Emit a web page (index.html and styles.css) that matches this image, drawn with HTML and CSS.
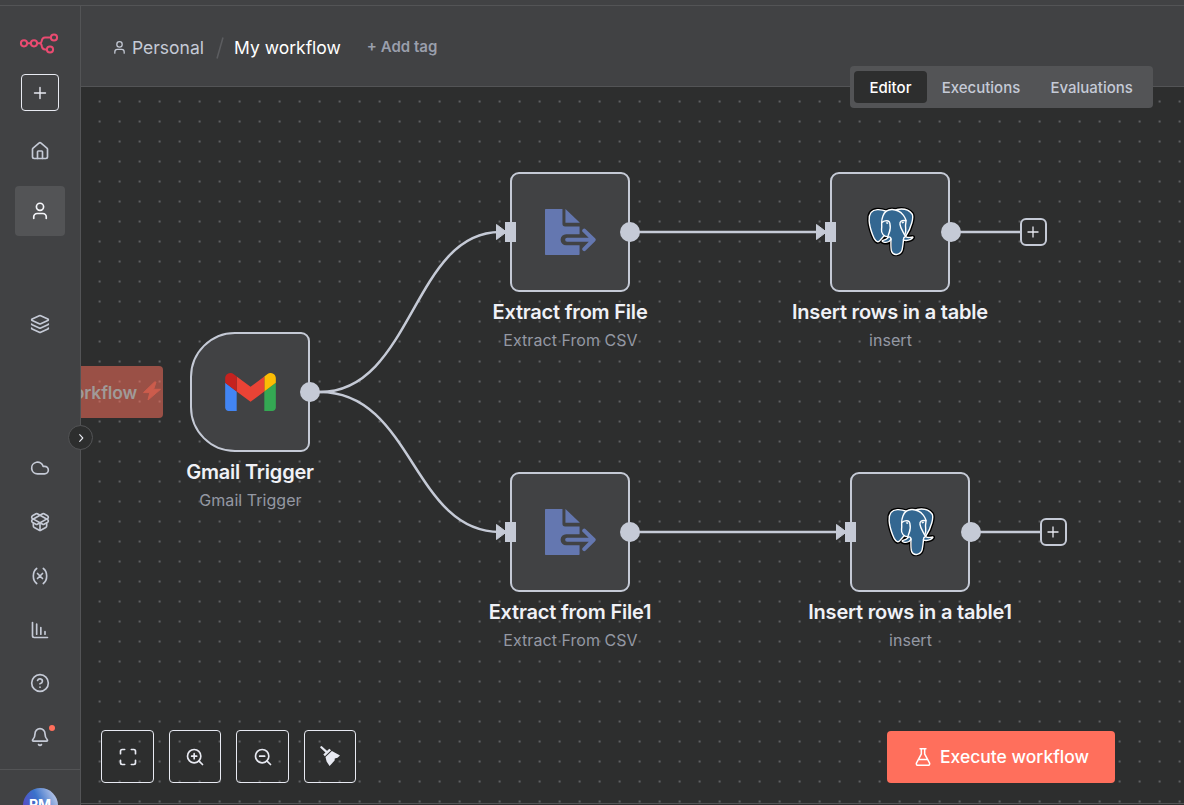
FILE: index.html
```html
<!DOCTYPE html>
<html lang="en">
<head>
<meta charset="utf-8">
<title>My workflow</title>
<link rel="stylesheet" href="styles.css">
</head>
<body>
<svg class="defs" aria-hidden="true">
  <symbol id="user" viewBox="0 0 24 24"><circle cx="12" cy="7" r="4.3"/><path d="M19.5 21v-2a4 4 0 0 0-4-4h-7a4 4 0 0 0-4 4v2"/></symbol>
  <symbol id="export" viewBox="195 148 152 137">
    <path d="M197 148h50v44q0 8 8 8h43v23h-40a16.500 16.500 0 0 0 0 33h40v27q0 2-2 2h-99q-2 0-2-2V150q0-2 2-2z"/>
    <path d="M256 148l43 41h-43z"/>
    <path class="export-arrow" d="M261 239.500h76M312 212.500l28 27-28 28"/>
  </symbol>
  <symbol id="postgres" viewBox="0 0 432.071 445.383">
    <path class="pg-outline" d="M323.205,324.227c2.833-23.601,1.984-27.062,19.563-23.239l4.463,0.392c13.517,0.615,31.199-2.174,41.587-7c22.362-10.376,35.622-27.700,13.572-23.148c-50.297,10.376-53.755-6.655-53.755-6.655c53.111-78.803,75.313-178.836,56.149-203.322C352.514-5.534,262.036,26.049,260.522,26.869l-0.482,0.089c-9.938-2.062-21.060-3.294-33.554-3.496c-22.761-0.374-40.032,5.967-53.133,15.904c0,0-161.408-66.498-153.899,83.628c1.597,31.936,45.777,241.655,98.470,178.310c19.259-23.163,37.871-42.748,37.871-42.748c9.242,6.140,20.307,9.272,31.912,8.147l0.897-0.765c-0.281,2.876-0.157,5.689,0.359,9.019c-13.572,15.167-9.584,17.830-36.723,23.416c-27.457,5.659-11.326,15.734-0.797,18.367c12.768,3.193,42.305,7.716,62.268-20.224l-0.795,3.188c5.325,4.260,4.965,30.619,5.720,49.452c0.756,18.834,2.017,36.409,5.856,46.771c3.839,10.360,8.369,37.050,44.036,29.406c29.809-6.388,52.600-15.582,54.677-101.107"/>
    <path class="pg-fill" d="M402.395,271.230c-50.302,10.376-53.760-6.655-53.760-6.655c53.111-78.808,75.313-178.843,56.153-203.326c-52.270-66.785-142.752-35.200-144.262-34.380l-0.486,0.087c-9.938-2.063-21.060-3.292-33.560-3.496c-22.761-0.373-40.026,5.967-53.127,15.902c0,0-161.411-66.495-153.904,83.630c1.597,31.938,45.776,241.657,98.471,178.312c19.260-23.163,37.869-42.748,37.869-42.748c9.243,6.140,20.308,9.272,31.908,8.147l0.901-0.765c-0.280,2.876-0.152,5.689,0.361,9.019c-13.575,15.167-9.586,17.830-36.723,23.416c-27.459,5.659-11.328,15.734-0.796,18.367c12.768,3.193,42.307,7.716,62.266-20.224l-0.796,3.188c5.319,4.260,9.054,27.711,8.428,48.969c-0.626,21.259-1.044,35.854,3.147,47.254c4.191,11.400,8.368,37.050,44.042,29.406c29.809-6.388,45.256-22.942,47.405-50.555c1.525-19.631,4.976-16.729,5.194-34.280l2.768-8.309c3.192-26.611,0.507-35.196,18.872-31.203l4.463,0.392c13.517,0.615,31.208-2.174,41.591-7c22.358-10.376,35.618-27.700,13.573-23.148z"/>
    <g class="pg-lines">
      <path d="M215.866,286.484c-1.385,49.516,0.348,99.377,5.193,111.495c4.848,12.118,15.223,35.688,50.900,28.045c29.806-6.390,40.651-18.756,45.357-46.051c3.466-20.082,10.148-75.854,11.005-87.281"/>
      <path d="M173.104,38.256c0,0-161.521-66.016-154.012,84.109c1.597,31.938,45.779,241.664,98.473,178.316c19.256-23.166,36.671-41.335,36.671-41.335"/>
      <path d="M260.349,26.207c-5.591,1.753,89.848-34.889,144.087,34.417c19.159,24.484-3.043,124.519-56.153,203.329"/>
      <path d="M348.282,263.953c0,0,3.461,17.036,53.764,6.653c22.040-4.552,8.776,12.774-13.577,23.155c-18.345,8.514-59.474,10.696-60.146-1.069c-1.729-30.355,21.647-21.133,19.960-28.739c-1.525-6.850-11.979-13.573-18.894-30.338c-6.037-14.633-82.796-126.849,21.287-110.183c3.813-0.789-27.146-99.002-124.553-100.599c-97.385-1.597-94.190,119.762-94.190,119.762"/>
      <path d="M188.604,274.334c-13.577,15.166-9.584,17.829-36.723,23.417c-27.459,5.660-11.326,15.733-0.797,18.365c12.768,3.195,42.307,7.718,62.266-20.229c6.078-8.509-0.036-22.086-8.385-25.547c-4.034-1.671-9.428-3.765-16.361,3.994z"/>
      <path d="M187.715,274.069c-1.368-8.917,2.930-19.528,7.536-31.942c6.922-18.626,22.893-37.255,10.117-96.339c-9.523-44.029-73.396-9.163-73.436-3.193c-0.039,5.968,2.889,30.260-1.067,58.548c-5.162,36.913,23.488,68.132,56.479,64.938"/>
      <path d="M350.676,123.432c0.863,15.994-3.445,26.888-3.988,43.914c-0.804,24.748,11.799,53.074-7.191,81.435"/>
    </g>
    <g class="pg-eyes">
      <path d="M172.517,141.700c-0.288,2.039,3.733,7.480,8.976,8.207c5.234,0.730,9.714-3.522,9.998-5.559c0.284-2.039-3.732-4.285-8.977-5.015c-5.237-0.731-9.719,0.333-9.996,2.367z"/>
      <path d="M331.941,137.543c0.284,2.039-3.732,7.480-8.976,8.207c-5.238,0.730-9.718-3.522-10.005-5.559c-0.277-2.039,3.740-4.285,8.979-5.015c5.239-0.730,9.718,0.333,10.002,2.368z"/>
    </g>
  </symbol>
</svg>

<div class="app">
  <div class="topstrip"></div>
  <div class="shell">
    <nav class="sidebar">
      <svg class="logo" viewBox="0 0 40 22">
        <circle cx="5" cy="11.300" r="3.100"/><circle cx="15" cy="11.300" r="3.100"/><circle cx="35" cy="5.500" r="3.100"/><circle cx="31" cy="17.500" r="3.100"/>
        <path d="M8.100 11.300h3.800M18.100 11.300h2.400c1.800 0 2-1 2.300-2.700.4-2.100 1.100-3.100 3.200-3.100h5.900M20.500 11.300c1.800 0 2 1 2.300 2.900.4 2.200 1.100 3.300 3.200 3.300h1.900"/>
      </svg>
      <button class="create"><svg class="icon i16" viewBox="0 0 16 16"><path d="M8 2.500v11M2.500 8h11"/></svg></button>
      <a class="item home"><svg class="icon i20" viewBox="0 0 24 24"><path d="M15 21v-8a1 1 0 0 0-1-1h-4a1 1 0 0 0-1 1v8"/><path d="M3 10a2 2 0 0 1 .709-1.528l7-5.999a2 2 0 0 1 2.582 0l7 5.999A2 2 0 0 1 21 10v9a2 2 0 0 1-2 2H5a2 2 0 0 1-2-2z"/></svg></a>
      <a class="item active"><svg class="icon i20"><use href="#user"/></svg></a>
      <a class="item layers"><svg class="icon i20" viewBox="0 0 24 24"><path d="M12.830 2.180a2 2 0 0 0-1.660 0L2.600 6.080a1 1 0 0 0 0 1.830l8.580 3.910a2 2 0 0 0 1.660 0l8.580-3.900a1 1 0 0 0 0-1.830z"/><path d="M2 12a1 1 0 0 0 .58.910l8.600 3.910a2 2 0 0 0 1.650 0l8.580-3.900A1 1 0 0 0 22 12"/><path d="M2 17a1 1 0 0 0 .58.910l8.600 3.910a2 2 0 0 0 1.650 0l8.580-3.900A1 1 0 0 0 22 17"/></svg></a>
      <div class="lower">
        <a class="item"><svg class="icon i20" viewBox="0 0 24 24"><path d="M17.500 19H9a7 7 0 1 1 6.710-9h1.790a4.500 4.500 0 1 1 0 9Z"/></svg></a>
        <a class="item"><svg class="icon i20" viewBox="0 0 24 24"><path d="M12 22v-9"/><path d="M15.170 2.210a1.670 1.670 0 0 1 1.630 0L21 4.570a1.930 1.930 0 0 1 0 3.360L8.820 14.790a1.655 1.655 0 0 1-1.640 0L3 12.430a1.930 1.930 0 0 1 0-3.360z"/><path d="M20 13v3.870a2.060 2.060 0 0 1-1.110 1.830l-6 3.080a1.930 1.930 0 0 1-1.780 0l-6-3.080A2.060 2.060 0 0 1 4 16.870V13"/><path d="M21 12.430a1.930 1.930 0 0 0 0-3.360L8.830 2.200a1.640 1.640 0 0 0-1.630 0L3 4.570a1.930 1.930 0 0 0 0 3.360l12.180 6.860a1.636 1.636 0 0 0 1.630 0z"/></svg></a>
        <a class="item"><svg class="icon i20" viewBox="0 0 24 24"><path d="M8 21s-4-3-4-9 4-9 4-9M16 3s4 3 4 9-4 9-4 9M15 9l-6 6M9 9l6 6"/></svg></a>
        <a class="item"><svg class="icon i20 chart" viewBox="0 0 24 24"><path d="M3 3v16a2 2 0 0 0 2 2h16M8 17V5M13 17V9M18 17v-3"/></svg></a>
        <a class="item"><svg class="icon i20" viewBox="0 0 24 24"><circle cx="12" cy="12" r="10"/><path d="M9.090 9a3 3 0 0 1 5.830 1c0 2-3 3-3 3M12 17h.01"/></svg></a>
        <a class="item bell"><svg class="icon i20" viewBox="0 0 24 24"><path d="M10.268 21a2 2 0 0 0 3.464 0"/><path d="M3.262 15.326A1 1 0 0 0 4 17h16a1 1 0 0 0 .74-1.673C19.410 13.956 18 12.499 18 8A6 6 0 0 0 6 8c0 4.499-1.411 5.956-2.738 7.326"/></svg><i class="notice"></i></a>
      </div>
      <div class="account"><span class="avatar">RM</span></div>
      <button class="expand"><svg class="icon i12" viewBox="0 0 12 12"><path d="M4.700 2.700L7.800 6l-3.100 3.300"/></svg></button>
    </nav>

    <main class="main">
      <header class="header">
        <svg class="icon person"><use href="#user"/></svg>
        <span class="project">Personal</span>
        <svg class="slash" viewBox="0 0 8 22"><path d="M7 .5L1 21.500"/></svg>
        <span class="title">My workflow</span>
        <span class="addtag">+ Add tag</span>
        <div class="tabs"><span class="tab on">Editor</span><span class="tab">Executions</span><span class="tab">Evaluations</span></div>
      </header>

      <section class="canvas">
        <div class="world">
          <svg class="wires" viewBox="0 0 1184 805">
            <defs><pattern id="dots" x="89.600" y="91.500" width="20" height="20" patternUnits="userSpaceOnUse"><circle cx="10" cy="10" r=".75" class="dot"/></pattern></defs>
            <rect width="1184" height="805" fill="url(#dots)"/>
            <g class="edges">
              <path d="M310 392H320C412.500 392 412.500 232 500 232"/>
              <path d="M310 392H320C412.500 392 412.500 532 500 532"/>
              <path d="M630 232H820M950 232H1020M630 532H840M970 532H1040"/>
            </g>
            <g class="arrows">
              <path d="M496.500 224.500l10 7.500-10 7.500zM496.500 524.500l10 7.500-10 7.500zM816.500 224.500l10 7.500-10 7.500zM836.500 524.500l10 7.500-10 7.500z"/>
            </g>
          </svg>

          <div class="trigger-run">Execute workflow<svg class="bolt" viewBox="0 0 20 20"><path d="M12.500 1L1.500 11.600h6.300L6 19 18.500 8.300h-6.800L14 1z"/></svg></div>

          <div class="node gmail">
            <div class="box"><svg class="gmail-icon" viewBox="52 42 88 66"><path fill="#4285f4" d="M58 108h14V74L52 59v43c0 3.320 2.690 6 6 6"/><path fill="#34a853" d="M120 108h14c3.320 0 6-2.690 6-6V59l-20 15"/><path fill="#fbbc04" d="M120 48v26l20-15v-8c0-7.420-8.470-11.650-14.400-7.200"/><path fill="#ea4335" d="M72 74V48l24 18 24-18v26L96 92"/><path fill="#c5221f" d="M52 51v8l20 15V48l-5.600-4.200c-5.940-4.450-14.400-.22-14.400 7.200"/></svg><i class="out"></i></div>
            <div class="name">Gmail Trigger</div><div class="sub">Gmail Trigger</div>
          </div>
          <div class="node extract-a">
            <div class="box"><svg class="export-icon"><use href="#export"/></svg><i class="in"></i><i class="out"></i></div>
            <div class="name">Extract from File</div><div class="sub">Extract From CSV</div>
          </div>
          <div class="node insert insert-a">
            <div class="box"><svg class="pg-icon"><use href="#postgres"/></svg><i class="in"></i><i class="out"></i></div>
            <div class="name">Insert rows in a table</div><div class="sub">insert</div>
          </div>
          <div class="node extract-b">
            <div class="box"><svg class="export-icon"><use href="#export"/></svg><i class="in"></i><i class="out"></i></div>
            <div class="name">Extract from File1</div><div class="sub">Extract From CSV</div>
          </div>
          <div class="node insert insert-b">
            <div class="box"><svg class="pg-icon"><use href="#postgres"/></svg><i class="in"></i><i class="out"></i></div>
            <div class="name">Insert rows in a table1</div><div class="sub">insert</div>
          </div>
          <button class="plus plus-a"><svg viewBox="0 0 12 12"><path d="M6 .5v11M.5 6h11"/></svg></button>
          <button class="plus plus-b"><svg viewBox="0 0 12 12"><path d="M6 .5v11M.5 6h11"/></svg></button>
        </div>

        <div class="footer">
          <div class="controls">
            <button class="control"><svg class="icon i20 fit" viewBox="0 0 24 24"><path d="M8 3H5a2 2 0 0 0-2 2v3M21 8V5a2 2 0 0 0-2-2h-3M3 16v3a2 2 0 0 0 2 2h3M16 21h3a2 2 0 0 0 2-2v-3"/></svg></button>
            <button class="control"><svg class="icon i20" viewBox="0 0 24 24"><circle cx="11" cy="11" r="8"/><path d="M21 21l-4.350-4.350M11 8v6M8 11h6"/></svg></button>
            <button class="control"><svg class="icon i20 fit" viewBox="0 0 24 24"><circle cx="11" cy="11" r="8"/><path d="M21 21l-4.350-4.350M8 11h6"/></svg></button>
            <button class="control"><svg class="broom" viewBox="0 0 20 20"><path class="handle" d="M1.400 1.200L6.200 5.600"/><path d="M3.300 8.600L9.300 2.800 11.100 4.300 4.900 10.200zM5.500 11L11.900 4.900 20 9.400 17.500 11.700 14.800 12.400 14.600 14.600 9.600 20 6.600 15.600z"/></svg></button>
          </div>
          <button class="execute"><svg class="icon flask" viewBox="0 0 24 24"><path d="M14 2v6a2 2 0 0 0 .245.960l5.510 10.080A2 2 0 0 1 18 22H6a2 2 0 0 1-1.755-2.960l5.510-10.080A2 2 0 0 0 10 8V2M6.453 15h11.094M8.500 2h7"/></svg>Execute workflow</button>
        </div>
      </section>
      <div class="bottomstrip"></div>
    </main>
  </div>
</div>
</body>
</html>
```
FILE: styles.css
```css
* { box-sizing: border-box; }
body { margin: 0; font-family: Inter, "Open Sans", sans-serif; background: #414244; color: #c5cad6; overflow: hidden; }
button { font: inherit; padding: 0; background: none; border: 0; color: inherit; display: flex; align-items: center; justify-content: center; }
.defs { position: absolute; width: 0; height: 0; }
.app { width: 1184px; height: 805px; display: flex; flex-direction: column; overflow: hidden; }
.topstrip { height: 6px; flex: none; border-bottom: 1px solid #535456; }
.shell { flex: 1; min-height: 0; display: flex; }

.icon { fill: none; stroke: currentColor; stroke-width: 2; stroke-linecap: round; stroke-linejoin: round; flex: none; display: block; }
.i20 { width: 20px; height: 20px; }
.i16 { width: 16px; height: 16px; stroke-width: 1.4; }
.i12 { width: 12px; height: 12px; stroke-width: 1.1; }

.sidebar { position: relative; z-index: 3; width: 81px; flex: none; border-right: 1px solid #535456; display: flex; flex-direction: column; align-items: center; color: #c5cad6; }
.logo { width: 40px; height: 22px; margin: 26px 0 20px -2px; fill: none; stroke: #ea4b71; stroke-width: 2; flex: none; }
.create { width: 38px; height: 37px; flex: none; border: 1px solid #e8eaf2; border-radius: 4px; color: #e8eaf2; }
.item { width: 50px; height: 50px; flex: none; display: flex; align-items: center; justify-content: center; border-radius: 4px; }
.home { margin-top: 15px; }
.active { margin-top: 10px; background: #535456; color: #f5f6fa; }
.layers { margin-top: 63px; }
.lower { margin-top: 94px; display: flex; flex-direction: column; gap: 3.8px; }
.chart { margin-top: 1px; }
.bell { position: relative; }
.notice { position: absolute; left: 34px; top: 13.5px; width: 6px; height: 6px; border-radius: 50%; background: #ff6f5c; }
.account { align-self: stretch; margin-top: 7px; padding-top: 18px; border-top: 1px solid #535456; display: flex; justify-content: center; }
.avatar { width: 35px; height: 35px; flex: none; border-radius: 50%; background: linear-gradient(65deg, #5b45c5 10%, #3a72cb 50%, #b9c7e8 90%); color: #fff; font-size: 14px; font-weight: 700; line-height: 34px; text-align: center; }
.expand { position: absolute; left: 68px; top: 419px; width: 25px; height: 25px; border-radius: 50%; border: 1px solid #535456; background: #2d2e2e; color: #e8eaf2; }

.main { flex: 1; min-width: 0; display: flex; flex-direction: column; }
.header { position: relative; z-index: 2; height: 81px; flex: none; border-bottom: 1px solid #535456; display: flex; align-items: center; padding-left: 31px; background: #414244; }
.person { width: 15px; height: 15px; margin-right: 5px; margin-top: 2px; }
.project { font-size: 17.5px; line-height: 24px; padding-top: 3px; }
.slash { width: 8px; height: 22px; margin: 4px 10px 0 12px; fill: none; stroke: #5c5d60; stroke-width: 1.5; }
.title { font-size: 17.5px; line-height: 24px; padding-top: 3px; color: #fff; }
.addtag { margin-left: 26px; padding-top: 1px; font-size: 15px; font-weight: 600; color: #9a9fac; }
.tabs { position: absolute; right: 31.5px; top: 60px; height: 42px; padding: 0 4.5px; display: flex; align-items: center; border-radius: 4px; background: #535456; }
.tab { height: 32px; line-height: 33px; padding: 0 15.1px; border-radius: 4px; font-size: 15px; font-weight: 500; }
.on { background: #2d2e2e; color: #fff; }

.canvas { position: relative; flex: 1; min-height: 0; background: #2d2e2e; overflow: hidden; display: flex; flex-direction: column; justify-content: flex-end; }
.bottomstrip { height: 2px; flex: none; border-top: 1px solid #535456; background: #2d2e2e; }
.world { position: absolute; left: -81px; top: -87px; width: 1184px; height: 805px; }
.wires { position: absolute; inset: 0; width: 1184px; height: 805px; }
.dot { fill: #a6a9b0; }
.edges { fill: none; stroke: #c5cad6; stroke-width: 2.5; }
.arrows { fill: #c5cad6; stroke: #c5cad6; stroke-linejoin: round; }

.trigger-run { position: absolute; right: 1021px; top: 366px; height: 52px; padding: 0 1px 0 20px; display: flex; align-items: center; gap: 5px; white-space: nowrap; border-radius: 4px; background: rgba(255, 111, 92, .52); color: #a09a98; font-size: 17.5px; font-weight: 600; letter-spacing: -.15px; }
.bolt { width: 20px; height: 20px; margin-top: -3px; fill: #cc5c4c; stroke: #cc5c4c; stroke-width: 1; stroke-linejoin: round; }

.node { position: absolute; width: 120px; display: flex; flex-direction: column; align-items: center; }
.gmail { left: 190px; top: 332px; }
.extract-a { left: 510px; top: 172px; }
.extract-b { left: 510px; top: 472px; }
.insert-a { left: 830px; top: 172px; }
.insert-b { left: 850px; top: 472px; }
.box { position: relative; width: 120px; height: 120px; border: 2px solid #c5cad6; border-radius: 9px; background: #414244; display: flex; align-items: center; justify-content: center; }
.gmail .box { border-radius: 45px 9px 9px 45px; }
.gmail-icon { width: 51px; height: 38px; }
.export-icon { width: 51px; height: 46px; fill: #6477b0; }
.export-arrow { fill: none; stroke: #6477b0; stroke-width: 12; stroke-linecap: round; stroke-linejoin: round; }
.pg-icon { width: 48px; height: 49.5px; margin-left: 1.5px; }
.pg-outline { fill: #000; stroke: #000; stroke-width: 37.400; }
.pg-fill { fill: #336791; }
.pg-lines { fill: none; stroke: #fff; stroke-width: 12.500; stroke-linecap: round; stroke-linejoin: round; }
.pg-eyes { fill: #fff; stroke: #fff; stroke-width: 4; }
.in { position: absolute; left: -7px; top: 48px; width: 10.5px; height: 20px; background: #c5cad6; }
.out { position: absolute; right: -12.4px; top: 48px; width: 20px; height: 20px; border-radius: 50%; background: #c5cad6; }
.insert .out { right: -13px; }
.name { margin-top: 7px; font-size: 20px; line-height: 26px; font-weight: 600; letter-spacing: -.2px; color: #f0f1f6; white-space: nowrap; }
.sub { margin-top: 5px; font-size: 16px; line-height: 20px; letter-spacing: .05px; padding-left: 1px; color: #9498a3; white-space: nowrap; }
.plus { position: absolute; width: 27.5px; height: 28px; border: 2px solid #c5cad6; border-radius: 6px; background: #2d2e2e; }
.plus svg { width: 12px; height: 12px; stroke: #e8eaf2; stroke-width: 1.3; }
.plus-a { left: 1019.500px; top: 218px; }
.plus-b { left: 1039.500px; top: 518px; }

.footer { position: relative; display: flex; justify-content: space-between; align-items: center; padding: 0 69px 20px 20px; }
.controls { display: flex; gap: 15px; }
.control { width: 52.600px; height: 53px; border: 1px solid #e8eaf2; border-radius: 4px; color: #e8eaf2; }
.fit { margin-left: 1px; }
.broom { width: 20px; height: 20px; margin-top: -1px; fill: #e8eaf2; }
.handle { stroke: #e8eaf2; stroke-width: 2.200; stroke-linecap: round; }
.execute { width: 228px; height: 52px; gap: 7px; border-radius: 4px; background: #ff6f5c; color: #fff; font-size: 17.5px; font-weight: 500; letter-spacing: 0; }
.flask { width: 20px; height: 20px; stroke-width: 1.800; }
```
